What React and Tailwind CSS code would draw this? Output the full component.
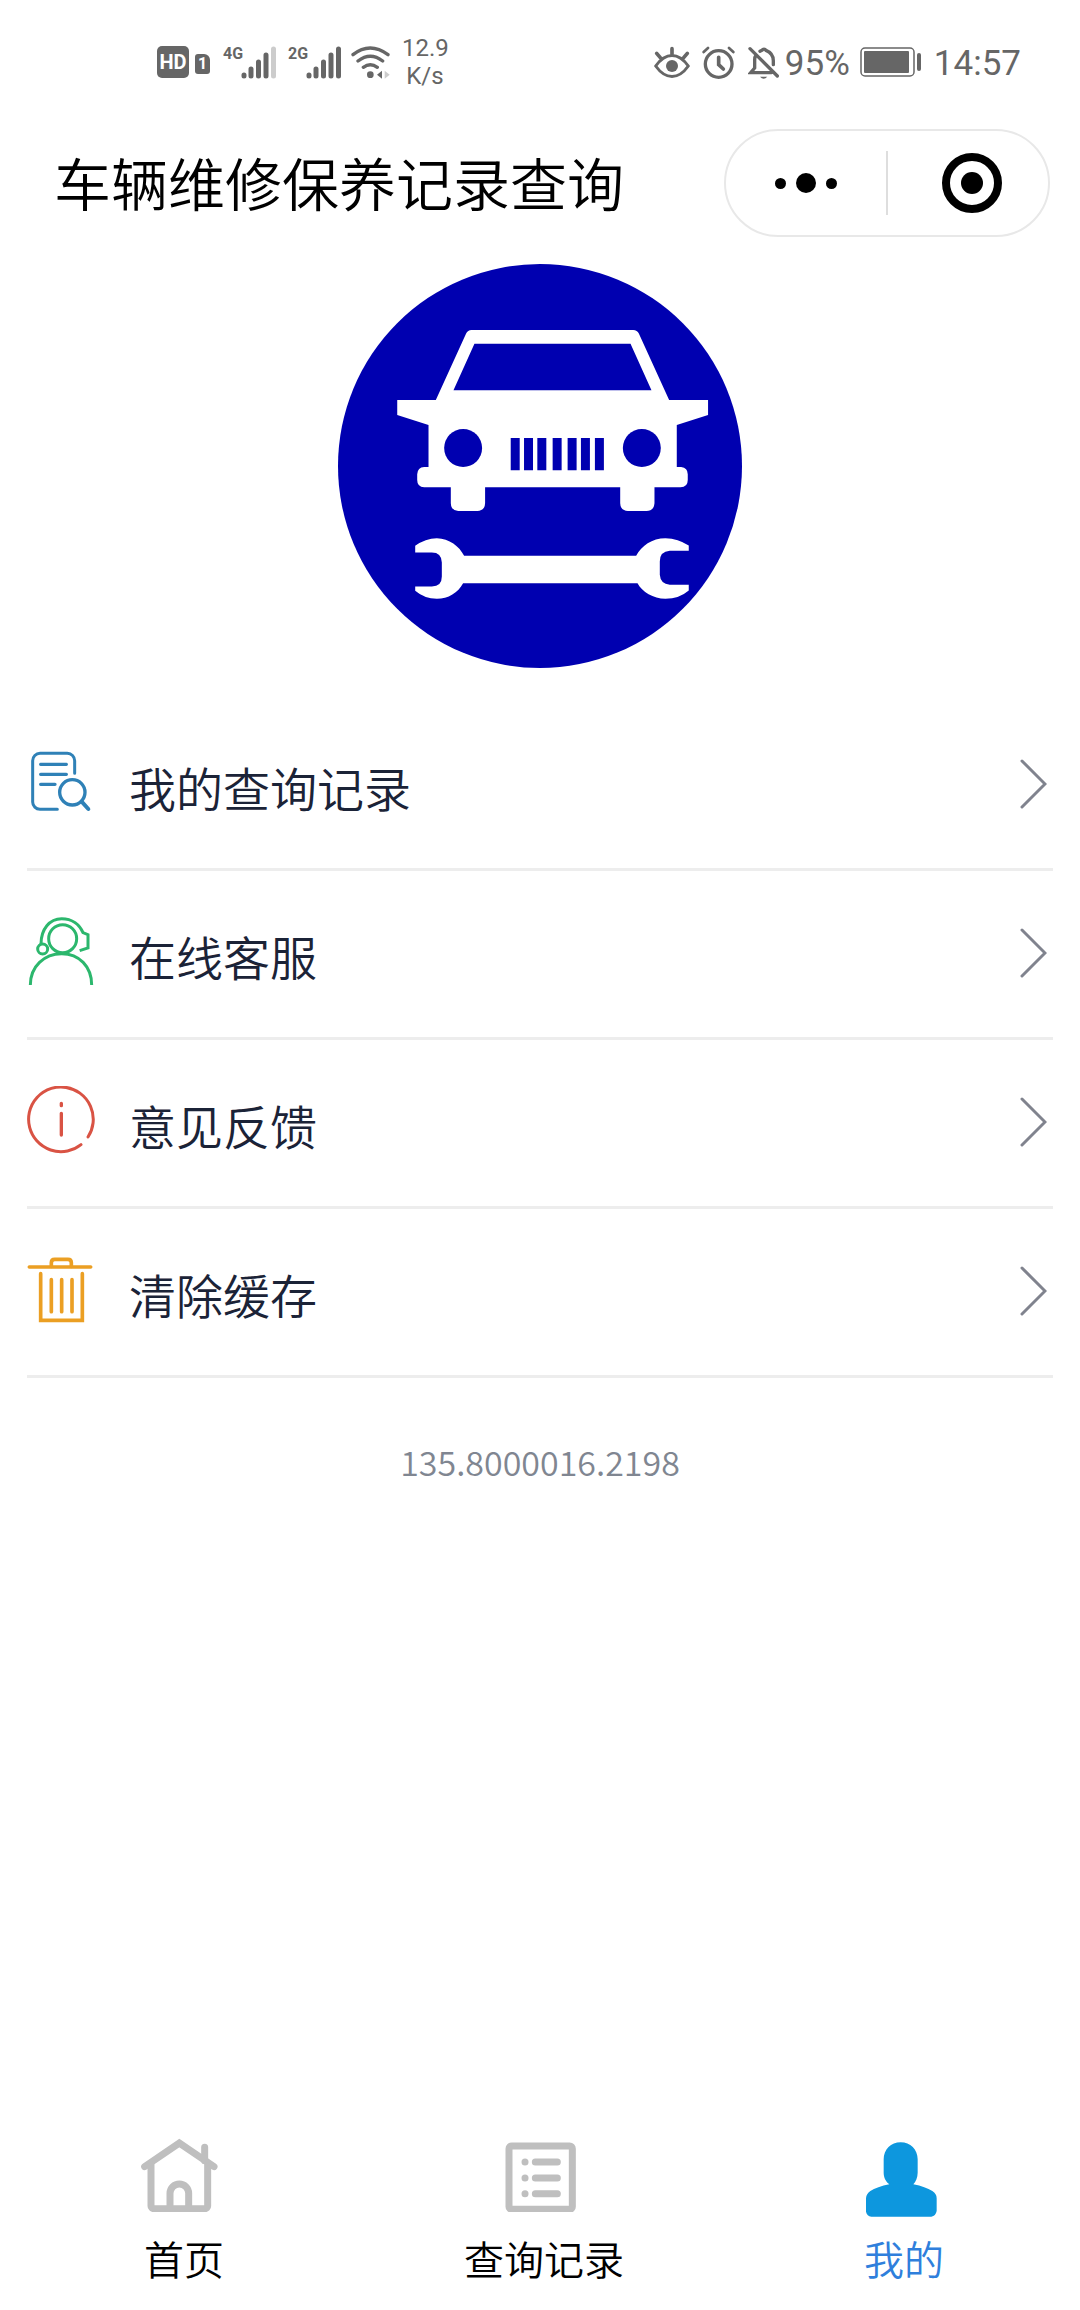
const menuItems = [
  { id: 'records', label: '我的查询记录', Icon: RecordIcon },
  { id: 'service', label: '在线客服', Icon: ServiceIcon },
  { id: 'feedback', label: '意见反馈', Icon: FeedbackIcon },
  { id: 'cache', label: '清除缓存', Icon: TrashIcon },
];

const tabs = [
  { id: 'home', label: '首页', Icon: HomeIcon },
  { id: 'history', label: '查询记录', Icon: ListIcon },
  { id: 'mine', label: '我的', Icon: MineIcon, active: true },
];

function RecordIcon() {
  return (
    <svg className="size-[68px]" viewBox="0 0 204 204" fill="none" stroke="#2f81b7" strokeWidth="9" strokeLinecap="round">
      <path d="M143 76V38a22 22 0 0 0-22-22H39a22 22 0 0 0-22 22V162a22 22 0 0 0 22 22H91" />
      <path d="M41 49H118M41 79H118M41 109H84" strokeWidth="10" />
      <circle cx="136" cy="133" r="38" strokeWidth="10" />
      <path d="M164 161L184 183" strokeWidth="12" />
    </svg>
  );
}

function ServiceIcon() {
  return (
    <svg className="size-[68px]" viewBox="0 0 204 204" fill="none" stroke="#2cb76d" strokeWidth="9">
      <path d="M10 204C10 148 52 110 104 110S194 148 194 204" />
      <circle cx="107" cy="65" r="42" />
      <circle cx="47" cy="96" r="15" />
      <path d="M42 81C42 36 68 5 104 5C136 5 158 24 168 47L183 53V93L158 101" />
    </svg>
  );
}

function FeedbackIcon() {
  return (
    <svg className="size-[68px]" viewBox="0 0 204 204" fill="none" stroke="#d95344" strokeWidth="9" strokeLinecap="round">
      <path d="M183 153A97 97 0 1 0 162 176" />
      <path d="M103 52V59M103 82V147" strokeWidth="10" />
    </svg>
  );
}

function TrashIcon() {
  return (
    <svg className="size-[68px]" viewBox="0 0 204 204" fill="none" stroke="#eb9f23" strokeWidth="11" strokeLinecap="round">
      <path d="M7 36H191" />
      <path d="M73 34V23Q73 13 83 13H123Q133 13 133 23V34" />
      <path d="M41 56V196H166V56M73 74V170M104 74V170M135 74V170" />
    </svg>
  );
}

function HomeIcon() {
  return (
    <svg className="size-[80px]" viewBox="0 0 240 240" fill="none" stroke="#bfbfbf" strokeWidth="21" strokeLinecap="round" strokeLinejoin="round">
      <path d="M14 104L118 33L222 104" strokeLinejoin="miter" />
      <path d="M33 98V222A8 8 0 0 0 41 230H195A8 8 0 0 0 203 222V98M194 46V86" />
      <path d="M90 228V184A28 28 0 0 1 146 184V228" strokeLinecap="butt" />
    </svg>
  );
}

function ListIcon() {
  return (
    <svg className="size-[80px]" viewBox="0 0 240 240" fill="none" stroke="#bfbfbf" strokeWidth="21" strokeLinecap="round">
      <rect x="27" y="42" width="190" height="190" rx="8" />
      <path d="M106 90H172M106 138H172M106 185H172" />
      <path d="M75 90h.1M75 138h.1M75 185h.1" />
    </svg>
  );
}

function MineIcon() {
  return (
    <svg className="size-[80px] overflow-visible" viewBox="0 0 240 240" fill="#0d97de">
      <path d="M122 31C151 31 173 53 173 82V122C173 137 167 149 160 157C185 162 203 169 217 177Q230 185 230 199V237Q227 252 214 254H34Q21 252 18 239V199Q19 185 31 177C44 169 64 162 88 157C78 149 71 137 71 122V82C71 53 93 31 122 31Z" />
    </svg>
  );
}

function Chevron() {
  return (
    <svg className="mr-[6px] h-[72px] w-[28px] shrink-0" viewBox="0 0 28 72" fill="none" stroke="#80838e" strokeWidth="3" strokeLinecap="round">
      <path d="M3 13L26 36L3 59" />
    </svg>
  );
}

function Signal({ network, weak }) {
  return (
    <div className="flex h-[33px] items-start">
      <span className="w-[18px] text-[16px] leading-[16px] font-bold">{network}</span>
      <svg className="h-[33px] w-[35px]" viewBox="0 0 35 33" stroke="#666" strokeWidth="5" strokeLinecap="round">
        <path d="M3 29V30M10 23V30M17.500 16V30M25 9V30" />
        <path d="M32.500 3V30" stroke={weak ? '#ccc' : '#666'} />
      </svg>
    </div>
  );
}

function StatusBar() {
  return (
    <div className="flex h-[124px] items-center justify-between pr-[59px] pl-[157px] font-['Roboto',sans-serif] font-normal text-[#666]">
      <div className="flex items-center">
        <span className="flex h-8 w-8 items-center justify-center rounded-[5px] bg-[#666] text-[20px] font-bold text-white">HD</span>
        <span className="mt-1 ml-[6px] flex h-5 w-[15px] items-center justify-center rounded-[3px] rounded-tr-[6px] bg-[#666] text-[16px] font-bold text-white">1</span>
        <div className="ml-[13px] flex gap-3">
          <Signal network="4G" weak />
          <Signal network="2G" />
        </div>
        <svg className="ml-[10px] h-[33px] w-[39px]" viewBox="0 0 117 99" fill="none" stroke="#666" strokeWidth="10" strokeLinecap="round">
          <path d="M6 26Q57-14 111 26M21 45Q58 16 95 45M37 64Q58 48 79 64" />
          <circle cx="58" cy="86" r="10" fill="#666" stroke="none" />
          <path d="M78 86L93 74V98Z" fill="#666" stroke="none" />
          <path d="M116 86L101 74V98Z" fill="#ccc" stroke="none" />
        </svg>
        <div className="ml-[12px] w-[46px] text-center text-[24px] leading-7">
          <div>12.9</div>
          <div>K/s</div>
        </div>
      </div>
      <div className="flex items-center">
        <svg className="h-[33px] w-[36px]" viewBox="0 0 108 99" fill="none" stroke="#666" strokeWidth="9" strokeLinecap="round">
          <path d="M5 60C35 18 73 18 103 60C73 102 35 102 5 60Z" strokeLinejoin="round" />
          <circle cx="54" cy="60" r="18" fill="#666" stroke="none" />
          <path d="M54 8V24M8 22L19 35M100 22L89 35" strokeWidth="11" />
        </svg>
        <svg className="ml-3 h-[33px] w-[33px]" viewBox="0 0 99 99" fill="none" stroke="#666" strokeWidth="10" strokeLinecap="round">
          <circle cx="50" cy="54" r="40" />
          <path d="M50 34V56L64 69" strokeWidth="11" />
          <path d="M5 18L18 6M94 18L81 6" strokeWidth="8" />
        </svg>
        <svg className="ml-[13px] h-[33px] w-[31px]" viewBox="0 0 93 99" fill="none" stroke="#666" strokeWidth="10" strokeLinecap="round">
          <path d="M6 8L88 90M70 80H8L20 66V42Q20 32 24 27M36 16Q40 14 42 13A7 7 0 0 1 54 13Q76 22 76 44V56" />
          <path d="M36 92H58Q47 104 36 92Z" fill="#666" stroke="none" />
        </svg>
        <span className="mt-[3px] ml-[6px] text-[35px] leading-10">95%</span>
        <svg className="ml-[10px] h-[30px] w-[62px]" viewBox="0 0 62 30" fill="none" stroke="#666">
          <rect x="1" y="1" width="53" height="28" rx="4" strokeWidth="1.500" />
          <rect x="4" y="4" width="45" height="22" rx="1" fill="#666" stroke="none" />
          <path d="M59 8V22" strokeWidth="4" strokeLinecap="round" />
        </svg>
        <span className="mt-[3px] ml-3 text-[35px] leading-10">14:57</span>
      </div>
    </div>
  );
}

function Header() {
  return (
    <header className="flex h-[118px] items-center justify-between pr-[30px] pl-[54px]">
      <h1 className="pb-1 text-[57px] leading-[80px] font-[350] text-black">车辆维修保养记录查询</h1>
      <div className="flex h-[108px] w-[326px] items-center rounded-full border-2 border-[#e8e8e8]">
        <button type="button" aria-label="更多" className="flex h-full flex-1 items-center justify-center gap-[10px]">
          <span className="size-[11px] rounded-full bg-black" />
          <span className="size-5 rounded-full bg-black" />
          <span className="size-[11px] rounded-full bg-black" />
        </button>
        <span className="h-16 w-[2px] bg-[#dedede]" />
        <button type="button" aria-label="关闭" className="flex h-full w-[160px] items-center justify-center pl-2">
          <span className="flex size-[60px] items-center justify-center rounded-full border-8 border-black">
            <span className="size-[22px] rounded-full bg-black" />
          </span>
        </button>
      </div>
    </header>
  );
}

function Logo() {
  return (
    <svg className="size-[404px]" viewBox="53 41 1214 1214" fill="#fff">
      <circle cx="660" cy="648" r="607" fill="#0000b0" />
      <path
        fillRule="evenodd"
        d="M454 239H940Q952 239 957 250L1048 450H1165V495L1071 525V651H1084Q1104 653 1104 673V690Q1104 712 1082 712H1004V760Q1002 783 980 783H924Q902 782 901 760V712H495V760Q494 782 472 783H414Q393 782 392 760V712H312Q291 711 291 690V673Q292 652 312 651H325V525L231 495V450H347L438 250Q443 239 454 239ZM463 281L400 420H995L932 281Z"
      />
      <path d="M285 888Q316 865 350 865C387 866 418 889 432 918H949C964 888 997 865 1037 865Q1075 866 1107 887V903H1050Q1020 905 1020 935V975Q1022 1003 1050 1005H1107V1022Q1078 1047 1037 1047C1000 1046 967 1026 953 1000H429C414 1028 384 1047 350 1047Q313 1047 285 1023V1010H335Q365 1010 365 980V938Q364 908 335 908H285Z" />
      <g fill="#0000b0">
        <circle cx="429" cy="594" r="57" />
        <circle cx="966" cy="594" r="57" />
        <path d="M572 564h27v97h-27zM612 564h27v97h-27zM652 564h27v97h-27zM698 564h27v97h-27zM743 564h27v97h-27zM783 564h27v97h-27zM825 564h27v97h-27z" />
      </g>
    </svg>
  );
}

export default function App() {
  return (
    <div className="flex min-h-screen flex-col bg-white font-['Noto_Sans_CJK_SC',sans-serif] font-[350]">
      <StatusBar />
      <Header />

      <main className="flex flex-1 flex-col">
        <div className="flex justify-center pt-[22px] pb-[34px]">
          <Logo />
        </div>

        <ul className="px-[27px]">
          {menuItems.map(({ id, label, Icon }) => (
            <li key={id} className="border-b-[3px] border-[#ededed]">
              <button type="button" className="flex h-[166px] w-full items-start pt-[46px] text-left">
                <Icon />
                <span className="ml-[34px] flex-1 text-[47px] leading-[78px] text-[#1b2337]">{label}</span>
                <Chevron />
              </button>
            </li>
          ))}
        </ul>

        <p className="mt-[59px] text-center text-[34px] leading-[50px] text-[#808691]">135.8000016.2198</p>
      </main>

      <nav className="grid grid-cols-3 pb-[22px]">
        {tabs.map(({ id, label, Icon, active }) => (
          <a key={id} href={`#${id}`} className="flex flex-col items-center">
            <Icon />
            <span className={`mt-4 pl-2 text-[40px] leading-[60px] ${active ? 'text-[#2f7fdc]' : 'text-black'}`}>{label}</span>
          </a>
        ))}
      </nav>
    </div>
  );
}
